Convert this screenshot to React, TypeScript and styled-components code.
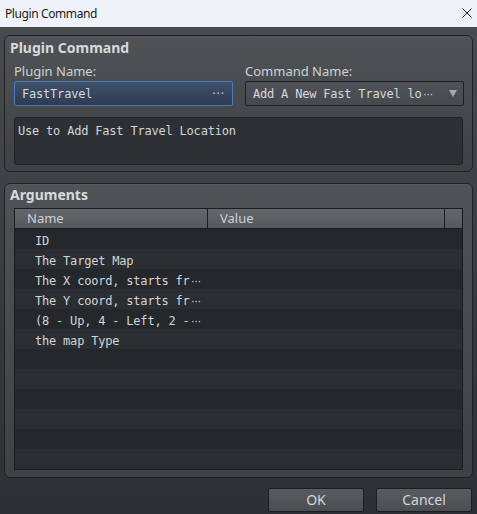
import React from "react";
import styled, { createGlobalStyle } from "styled-components";

const Global = createGlobalStyle`
  html, body { margin: 0; padding: 0; background: #2f3235; }
  * { box-sizing: border-box; }
`;

const sans = `"Noto Sans", "Open Sans", "DejaVu Sans", sans-serif`;
const mono = `"DejaVu Sans Mono", "Liberation Mono", monospace`;

const Window = styled.div`
  width: 477px;
  height: 514px;
  display: flex;
  flex-direction: column;
  overflow: hidden;
  font-family: ${sans};
`;

const TitleBar = styled.div`
  height: 27px;
  flex: none;
  background: #eef2f9;
  display: flex;
  align-items: center;
  justify-content: space-between;
  padding: 0 5px 0 5px;
  font-family: "Segoe UI", ${sans};
  font-size: 12px;
  letter-spacing: -0.4px;
  color: #1a1a1a;
`;

const CloseIcon = styled.svg`
  width: 10px;
  height: 10px;
  display: block;
  margin-top: -1px;
`;

const Body = styled.div`
  flex: 1;
  display: flex;
  flex-direction: column;
  background: linear-gradient(#474b4e 0%, #3d4144 35%, #34373a 70%, #2e3134 100%);
  padding: 8px 4px 2px 4px;
`;

const Group = styled.section<{ $grow?: boolean }>`
  border: 1px solid #1f2123;
  border-radius: 6px;
  background: linear-gradient(#4f5356, #3e4245);
  box-shadow: inset 0 1px 0 rgba(255, 255, 255, 0.04);
  display: flex;
  flex-direction: column;
  padding: 0 9px 0 9px;
  ${(p) => (p.$grow ? "flex: 1;" : "")}
`;

const GroupTitle = styled.div<{ $top: number }>`
  font-size: 14px;
  font-weight: 700;
  line-height: 16px;
  color: #d6dadd;
  margin-left: -4px;
  margin-top: ${(p) => p.$top}px;
`;

const FieldRow = styled.div`
  display: grid;
  grid-template-columns: 219px 219px;
  column-gap: 12px;
  margin-top: 7px;
`;

const Field = styled.div`
  display: flex;
  flex-direction: column;
  gap: 2px;
`;

const Label = styled.div`
  font-size: 13px;
  line-height: 16px;
  color: #cfd3d6;
`;

const Input = styled.div<{ $focused?: boolean }>`
  height: 25px;
  border-radius: 2px;
  display: flex;
  align-items: center;
  justify-content: space-between;
  padding: 0 6px 0 7px;
  font-family: ${mono};
  font-size: 12px;
  letter-spacing: -0.2px;
  color: #d6d9dc;
  border: 1px solid ${(p) => (p.$focused ? "#4a7abf" : "#1d1f21")};
  background: ${(p) =>
    p.$focused
      ? "linear-gradient(#3e506a, #2d3c52)"
      : "linear-gradient(#4f5357, #464a4e)"};
`;

const InputText = styled.span`
  white-space: nowrap;
  overflow: hidden;
`;

const Dots = styled.span`
  font-family: ${sans};
  font-size: 12px;
  letter-spacing: 1px;
  color: #c4c8cc;
  margin-right: 1px;
`;

const Elide = styled.span`
  display: inline-block;
  width: 10px;
  margin-left: 2px;
  font-family: ${sans};
  font-size: 10px;
  letter-spacing: 0.5px;
  text-align: left;
  vertical-align: baseline;
`;

const Arrow = styled.span`
  width: 0;
  height: 0;
  border-left: 4.5px solid transparent;
  border-right: 4.5px solid transparent;
  border-top: 7px solid #a6aaae;
`;

const Description = styled.div`
  margin-top: 11px;
  margin-bottom: 6px;
  height: 48px;
  border: 1px solid #1f2123;
  border-radius: 3px;
  background: #2e3134;
  padding: 5px 3px;
  font-family: ${mono};
  font-size: 12px;
  letter-spacing: -0.2px;
  line-height: 16px;
  color: #d2d5d8;
`;

const Table = styled.div`
  margin-top: 5px;
  margin-bottom: 7px;
  border: 1px solid #1a1c1e;
  display: flex;
  flex-direction: column;
`;

const HeaderRow = styled.div`
  display: grid;
  grid-template-columns: 193px 1fr 17px;
  height: 20px;
  background: linear-gradient(#63686c, #55595d);
  border-bottom: 1px solid #1a1c1e;
`;

const HeaderCell = styled.div<{ $last?: boolean }>`
  font-size: 13px;
  line-height: 19px;
  color: #cdd1d4;
  padding-left: 12px;
  border-right: ${(p) => (p.$last ? "none" : "1px solid #1a1c1e")};
`;

const Row = styled.div<{ $alt: boolean }>`
  height: 20px;
  background: ${(p) => (p.$alt ? "#2b2e31" : "#25282a")};
  padding: 2px 0 0 20px;
  font-family: ${mono};
  font-size: 12px;
  letter-spacing: -0.2px;
  line-height: 20px;
  color: #d2d5d8;
  white-space: nowrap;
`;

const ButtonBar = styled.div`
  display: flex;
  justify-content: flex-end;
  gap: 12px;
  margin-top: 10px;
  padding-right: 1px;
`;

const Button = styled.button`
  width: 96px;
  height: 24px;
  border: 1px solid #1c1d1f;
  border-radius: 2px;
  background: linear-gradient(#585c60, #4a4e51);
  color: #d4d7da;
  font-family: ${sans};
  font-size: 14px;
  padding: 0;
  line-height: 20px;
`;

type RowData = { text: string; elided?: boolean };

const rows: RowData[] = [
  { text: "ID" },
  { text: "The Target Map" },
  { text: "The X coord, starts fr", elided: true },
  { text: "The Y coord, starts fr", elided: true },
  { text: "(8 - Up, 4 - Left, 2 -", elided: true },
  { text: "the map Type" },
  { text: "" },
  { text: "" },
  { text: "" },
  { text: "" },
  { text: "" },
  { text: "" },
];

export default function App() {
  return (
    <Window>
      <Global />
      <TitleBar>
        <span>Plugin Command</span>
        <CloseIcon viewBox="0 0 10 10">
          <path d="M0.5 0.5 L9.5 9.5 M9.5 0.5 L0.5 9.5" stroke="#222" strokeWidth="1" />
        </CloseIcon>
      </TitleBar>
      <Body>
        <Group>
          <GroupTitle $top={4}>Plugin Command</GroupTitle>
          <FieldRow>
            <Field>
              <Label>Plugin Name:</Label>
              <Input $focused>
                <InputText>FastTravel</InputText>
                <Dots>···</Dots>
              </Input>
            </Field>
            <Field>
              <Label>Command Name:</Label>
              <Input>
                <InputText>
                  Add A New Fast Travel lo<Elide>···</Elide>
                </InputText>
                <Arrow />
              </Input>
            </Field>
          </FieldRow>
          <Description>Use to Add Fast Travel Location</Description>
        </Group>
        <div style={{ height: 11 }} />
        <Group $grow>
          <GroupTitle $top={3}>Arguments</GroupTitle>
          <Table>
            <HeaderRow>
              <HeaderCell>Name</HeaderCell>
              <HeaderCell>Value</HeaderCell>
              <HeaderCell $last />
            </HeaderRow>
            {rows.map((r, i) => (
              <Row key={i} $alt={i % 2 === 1}>
                {r.text}
                {r.elided && <Elide>···</Elide>}
              </Row>
            ))}
          </Table>
        </Group>
        <ButtonBar>
          <Button>OK</Button>
          <Button>Cancel</Button>
        </ButtonBar>
      </Body>
    </Window>
  );
}
